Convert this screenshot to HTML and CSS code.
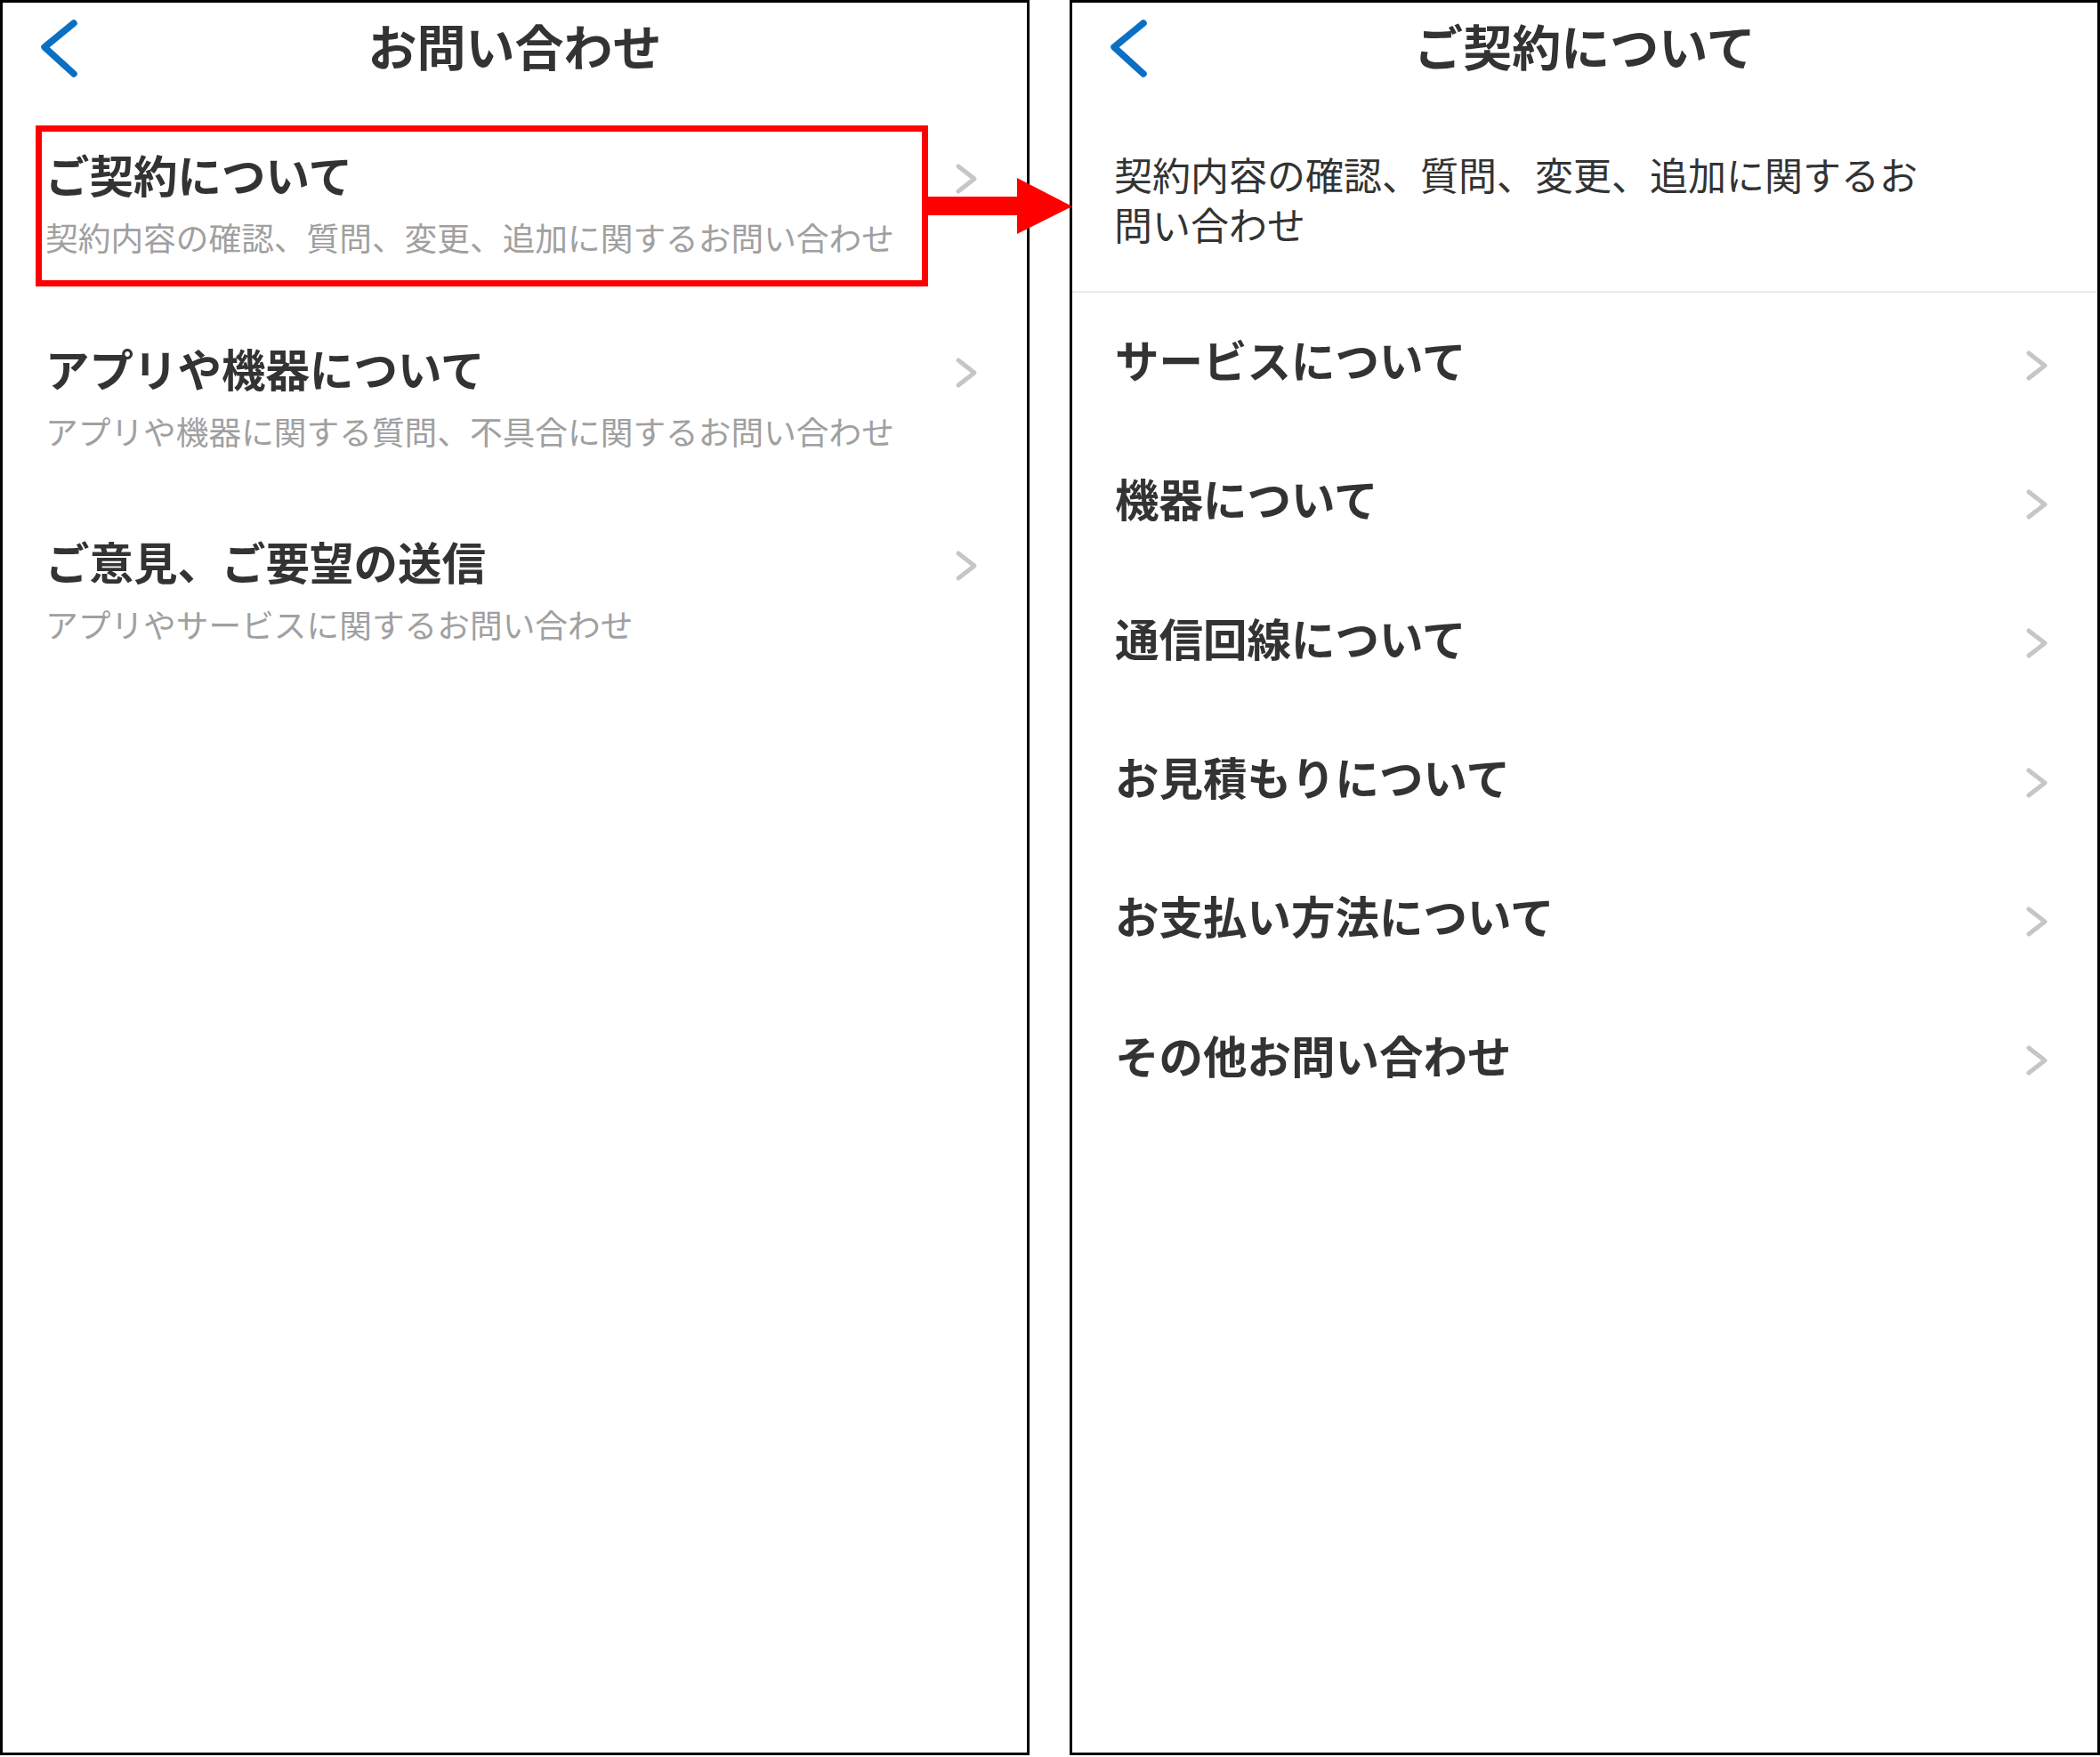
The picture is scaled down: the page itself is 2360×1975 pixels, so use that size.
FILE: index.html
```html
<!DOCTYPE html>
<html lang="ja">
<head>
<meta charset="utf-8">
<title>お問い合わせ</title>
<link rel="stylesheet" href="styles.css">
</head>
<body>
<div class="page">
  <section class="panel panel-left">
    <header class="nav">
      <svg class="back" width="50" height="72" viewBox="0 0 50 72"><polyline points="41,8 8,35 41,65" fill="none" stroke="#0a70c4" stroke-width="7.5" stroke-linecap="round" stroke-linejoin="round"/></svg>
      <h1 class="nav-title">お問い合わせ</h1>
      <span></span>
    </header>
    <ul class="menu">
      <li class="menu-item">
        <span class="menu-title">ご契約について</span>
        <svg class="chev" width="28" height="38" viewBox="0 0 28 38"><polyline points="5,5 23,19 5,33" fill="none" stroke="#c6c6c8" stroke-width="5" stroke-linecap="round" stroke-linejoin="round"/></svg>
        <span class="menu-sub">契約内容の確認、質問、変更、追加に関するお問い合わせ</span>
      </li>
      <li class="menu-item">
        <span class="menu-title">アプリや機器について</span>
        <svg class="chev" width="28" height="38" viewBox="0 0 28 38"><polyline points="5,5 23,19 5,33" fill="none" stroke="#c6c6c8" stroke-width="5" stroke-linecap="round" stroke-linejoin="round"/></svg>
        <span class="menu-sub">アプリや機器に関する質問、不具合に関するお問い合わせ</span>
      </li>
      <li class="menu-item">
        <span class="menu-title">ご意見、ご要望の送信</span>
        <svg class="chev" width="28" height="38" viewBox="0 0 28 38"><polyline points="5,5 23,19 5,33" fill="none" stroke="#c6c6c8" stroke-width="5" stroke-linecap="round" stroke-linejoin="round"/></svg>
        <span class="menu-sub">アプリやサービスに関するお問い合わせ</span>
      </li>
    </ul>
    <div class="highlight"></div>
  </section>

  <section class="panel panel-right">
    <header class="nav">
      <svg class="back" width="50" height="72" viewBox="0 0 50 72"><polyline points="41,8 8,35 41,65" fill="none" stroke="#0a70c4" stroke-width="7.5" stroke-linecap="round" stroke-linejoin="round"/></svg>
      <h1 class="nav-title">ご契約について</h1>
      <span></span>
    </header>
    <p class="desc">契約内容の確認、質問、変更、追加に関するお問い合わせ</p>
    <ul class="list">
      <li class="row"><span class="row-title">サービスについて</span><svg class="chev" width="28" height="38" viewBox="0 0 28 38"><polyline points="5,5 23,19 5,33" fill="none" stroke="#c6c6c8" stroke-width="5" stroke-linecap="round" stroke-linejoin="round"/></svg></li>
      <li class="row"><span class="row-title">機器について</span><svg class="chev" width="28" height="38" viewBox="0 0 28 38"><polyline points="5,5 23,19 5,33" fill="none" stroke="#c6c6c8" stroke-width="5" stroke-linecap="round" stroke-linejoin="round"/></svg></li>
      <li class="row"><span class="row-title">通信回線について</span><svg class="chev" width="28" height="38" viewBox="0 0 28 38"><polyline points="5,5 23,19 5,33" fill="none" stroke="#c6c6c8" stroke-width="5" stroke-linecap="round" stroke-linejoin="round"/></svg></li>
      <li class="row"><span class="row-title">お見積もりについて</span><svg class="chev" width="28" height="38" viewBox="0 0 28 38"><polyline points="5,5 23,19 5,33" fill="none" stroke="#c6c6c8" stroke-width="5" stroke-linecap="round" stroke-linejoin="round"/></svg></li>
      <li class="row"><span class="row-title">お支払い方法について</span><svg class="chev" width="28" height="38" viewBox="0 0 28 38"><polyline points="5,5 23,19 5,33" fill="none" stroke="#c6c6c8" stroke-width="5" stroke-linecap="round" stroke-linejoin="round"/></svg></li>
      <li class="row"><span class="row-title">その他お問い合わせ</span><svg class="chev" width="28" height="38" viewBox="0 0 28 38"><polyline points="5,5 23,19 5,33" fill="none" stroke="#c6c6c8" stroke-width="5" stroke-linecap="round" stroke-linejoin="round"/></svg></li>
    </ul>
  </section>

  <svg class="arrow" width="168" height="63" viewBox="0 0 168 63"><rect x="0" y="21" width="107" height="21" fill="#ff0000"/><polygon points="106,0 168,32 106,63" fill="#ff0000"/></svg>
</div>
</body>
</html>
```

FILE: styles.css
```css
* { box-sizing: border-box; }
html, body { margin: 0; padding: 0; background: #ffffff; }
body {
  font-family: "Noto Sans CJK JP", "Noto Sans", sans-serif;
  color: #333333;
}
.page {
  position: relative;
  display: flex;
  gap: 45px;
  width: 2360px;
  height: 1975px;
}
.panel {
  position: relative;
  height: 1973px;
  border: 3px solid #000000;
  background: #ffffff;
}
.panel-left { width: 1157px; }
.panel-right { width: 1158px; }

.nav {
  height: 94px;
  display: grid;
  grid-template-columns: 1fr auto 1fr;
  align-items: center;
}
.back {
  display: block;
  margin-left: 39px;
  margin-top: 8px;
}
.nav-title {
  margin: 0;
  font-size: 55px;
  line-height: 70px;
  font-weight: 700;
  color: #333333;
}

.menu, .list {
  list-style: none;
  margin: 0;
  padding: 0;
}
.menu { padding-top: 22px; }
.menu-item {
  display: grid;
  grid-template-columns: 1fr auto;
  padding: 45px 54px 45.5px 48px;
}
.menu-title {
  font-size: 49.5px;
  line-height: 64px;
  font-weight: 700;
  color: #333333;
}
.menu-item .chev {
  margin-top: 18px;
}
.menu-sub {
  grid-column: 1 / 3;
  margin-top: 13px;
  font-size: 36.7px;
  line-height: 50px;
  color: #a0a0a0;
  white-space: nowrap;
}
.highlight {
  position: absolute;
  left: 37px;
  top: 138px;
  width: 1003px;
  height: 181px;
  border: 7px solid #ff0000;
}

.desc {
  margin: 0;
  padding: 70px 185px 48px 47px;
  font-size: 43px;
  line-height: 56px;
  color: #333333;
  border-bottom: 2px solid #ebebeb;
}

.row {
  height: 156.33px;
  display: flex;
  align-items: center;
  justify-content: space-between;
  padding: 0 54px 0 48px;
}
.row-title {
  font-size: 49.5px;
  line-height: 64px;
  font-weight: 700;
  color: #333333;
  margin-bottom: 6px;
}
.row .chev {
  margin-top: 7px;
}
.chev { display: block; }

.arrow {
  position: absolute;
  left: 1037px;
  top: 200px;
}
```
